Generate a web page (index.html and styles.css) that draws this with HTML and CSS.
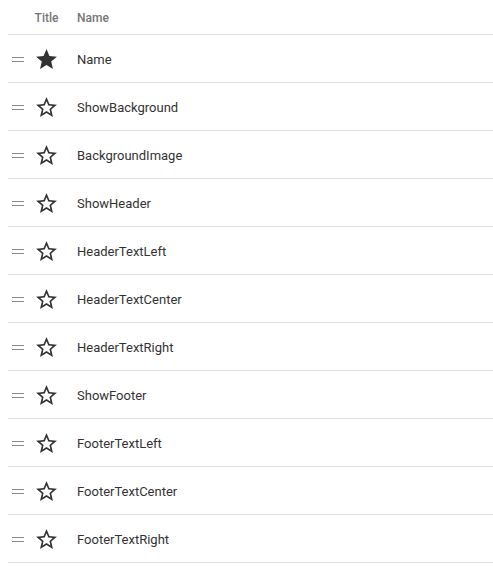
FILE: index.html
```html
<!DOCTYPE html>
<html>
<head>
<meta charset="utf-8">
<link rel="stylesheet" href="styles.css">
</head>
<body>
<div class="table">
  <div class="row head">
    <div class="cell"></div>
    <div class="cell title-h">Title</div>
    <div class="cell name">Name</div>
  </div>
  <div class="row">
    <div class="cell handle"><svg viewBox="0 0 12 5"><rect x="0" y="0" width="12" height="1"/><rect x="0" y="4" width="12" height="1"/></svg></div>
    <div class="cell star"><svg viewBox="0 0 24 24"><path d="M12 17.27L18.18 21l-1.64-7.03L22 9.24l-7.19-.61L12 2 9.19 8.63 2 9.24l5.46 4.73L5.82 21z"/></svg></div>
    <div class="cell name">Name</div>
  </div>
  <div class="row">
    <div class="cell handle"><svg viewBox="0 0 12 5"><rect x="0" y="0" width="12" height="1"/><rect x="0" y="4" width="12" height="1"/></svg></div>
    <div class="cell star"><svg viewBox="0 0 24 24"><path d="M22 9.24l-7.19-.62L12 2 9.19 8.63 2 9.24l5.46 4.73L5.82 21 12 17.27 18.18 21l-1.63-7.03L22 9.24zM12 15.4l-3.76 2.27 1-4.28-3.32-2.88 4.38-.38L12 6.1l1.71 4.04 4.38.38-3.32 2.88 1 4.28L12 15.4z"/></svg></div>
    <div class="cell name">ShowBackground</div>
  </div>
  <div class="row">
    <div class="cell handle"><svg viewBox="0 0 12 5"><rect x="0" y="0" width="12" height="1"/><rect x="0" y="4" width="12" height="1"/></svg></div>
    <div class="cell star"><svg viewBox="0 0 24 24"><path d="M22 9.24l-7.19-.62L12 2 9.19 8.63 2 9.24l5.46 4.73L5.82 21 12 17.27 18.18 21l-1.63-7.03L22 9.24zM12 15.4l-3.76 2.27 1-4.28-3.32-2.88 4.38-.38L12 6.1l1.71 4.04 4.38.38-3.32 2.88 1 4.28L12 15.4z"/></svg></div>
    <div class="cell name">BackgroundImage</div>
  </div>
  <div class="row">
    <div class="cell handle"><svg viewBox="0 0 12 5"><rect x="0" y="0" width="12" height="1"/><rect x="0" y="4" width="12" height="1"/></svg></div>
    <div class="cell star"><svg viewBox="0 0 24 24"><path d="M22 9.24l-7.19-.62L12 2 9.19 8.63 2 9.24l5.46 4.73L5.82 21 12 17.27 18.18 21l-1.63-7.03L22 9.24zM12 15.4l-3.76 2.27 1-4.28-3.32-2.88 4.38-.38L12 6.1l1.71 4.04 4.38.38-3.32 2.88 1 4.28L12 15.4z"/></svg></div>
    <div class="cell name">ShowHeader</div>
  </div>
  <div class="row">
    <div class="cell handle"><svg viewBox="0 0 12 5"><rect x="0" y="0" width="12" height="1"/><rect x="0" y="4" width="12" height="1"/></svg></div>
    <div class="cell star"><svg viewBox="0 0 24 24"><path d="M22 9.24l-7.19-.62L12 2 9.19 8.63 2 9.24l5.46 4.73L5.82 21 12 17.27 18.18 21l-1.63-7.03L22 9.24zM12 15.4l-3.76 2.27 1-4.28-3.32-2.88 4.38-.38L12 6.1l1.71 4.04 4.38.38-3.32 2.88 1 4.28L12 15.4z"/></svg></div>
    <div class="cell name">HeaderTextLeft</div>
  </div>
  <div class="row">
    <div class="cell handle"><svg viewBox="0 0 12 5"><rect x="0" y="0" width="12" height="1"/><rect x="0" y="4" width="12" height="1"/></svg></div>
    <div class="cell star"><svg viewBox="0 0 24 24"><path d="M22 9.24l-7.19-.62L12 2 9.19 8.63 2 9.24l5.46 4.73L5.82 21 12 17.27 18.18 21l-1.63-7.03L22 9.24zM12 15.4l-3.76 2.27 1-4.28-3.32-2.88 4.38-.38L12 6.1l1.71 4.04 4.38.38-3.32 2.88 1 4.28L12 15.4z"/></svg></div>
    <div class="cell name">HeaderTextCenter</div>
  </div>
  <div class="row">
    <div class="cell handle"><svg viewBox="0 0 12 5"><rect x="0" y="0" width="12" height="1"/><rect x="0" y="4" width="12" height="1"/></svg></div>
    <div class="cell star"><svg viewBox="0 0 24 24"><path d="M22 9.24l-7.19-.62L12 2 9.19 8.63 2 9.24l5.46 4.73L5.82 21 12 17.27 18.18 21l-1.63-7.03L22 9.24zM12 15.4l-3.76 2.27 1-4.28-3.32-2.88 4.38-.38L12 6.1l1.71 4.04 4.38.38-3.32 2.88 1 4.28L12 15.4z"/></svg></div>
    <div class="cell name">HeaderTextRight</div>
  </div>
  <div class="row">
    <div class="cell handle"><svg viewBox="0 0 12 5"><rect x="0" y="0" width="12" height="1"/><rect x="0" y="4" width="12" height="1"/></svg></div>
    <div class="cell star"><svg viewBox="0 0 24 24"><path d="M22 9.24l-7.19-.62L12 2 9.19 8.63 2 9.24l5.46 4.73L5.82 21 12 17.27 18.18 21l-1.63-7.03L22 9.24zM12 15.4l-3.76 2.27 1-4.28-3.32-2.88 4.38-.38L12 6.1l1.71 4.04 4.38.38-3.32 2.88 1 4.28L12 15.4z"/></svg></div>
    <div class="cell name">ShowFooter</div>
  </div>
  <div class="row">
    <div class="cell handle"><svg viewBox="0 0 12 5"><rect x="0" y="0" width="12" height="1"/><rect x="0" y="4" width="12" height="1"/></svg></div>
    <div class="cell star"><svg viewBox="0 0 24 24"><path d="M22 9.24l-7.19-.62L12 2 9.19 8.63 2 9.24l5.46 4.73L5.82 21 12 17.27 18.18 21l-1.63-7.03L22 9.24zM12 15.4l-3.76 2.27 1-4.28-3.32-2.88 4.38-.38L12 6.1l1.71 4.04 4.38.38-3.32 2.88 1 4.28L12 15.4z"/></svg></div>
    <div class="cell name">FooterTextLeft</div>
  </div>
  <div class="row">
    <div class="cell handle"><svg viewBox="0 0 12 5"><rect x="0" y="0" width="12" height="1"/><rect x="0" y="4" width="12" height="1"/></svg></div>
    <div class="cell star"><svg viewBox="0 0 24 24"><path d="M22 9.24l-7.19-.62L12 2 9.19 8.63 2 9.24l5.46 4.73L5.82 21 12 17.27 18.18 21l-1.63-7.03L22 9.24zM12 15.4l-3.76 2.27 1-4.28-3.32-2.88 4.38-.38L12 6.1l1.71 4.04 4.38.38-3.32 2.88 1 4.28L12 15.4z"/></svg></div>
    <div class="cell name">FooterTextCenter</div>
  </div>
  <div class="row">
    <div class="cell handle"><svg viewBox="0 0 12 5"><rect x="0" y="0" width="12" height="1"/><rect x="0" y="4" width="12" height="1"/></svg></div>
    <div class="cell star"><svg viewBox="0 0 24 24"><path d="M22 9.24l-7.19-.62L12 2 9.19 8.63 2 9.24l5.46 4.73L5.82 21 12 17.27 18.18 21l-1.63-7.03L22 9.24zM12 15.4l-3.76 2.27 1-4.28-3.32-2.88 4.38-.38L12 6.1l1.71 4.04 4.38.38-3.32 2.88 1 4.28L12 15.4z"/></svg></div>
    <div class="cell name">FooterTextRight</div>
  </div>
</div>
</body>
</html>
```

FILE: styles.css
```css
html, body {
  background: #fff;
}
body {
  margin: 0 0 0 8px;
  font-family: Roboto, "Liberation Sans", sans-serif;
}
.table {
  display: flex;
  flex-direction: column;
}
.row {
  display: grid;
  grid-template-columns: 26px 25px 1fr;
  align-items: center;
  height: 47px;
  border-bottom: 1px solid #e0e0e0;
}
.row.head {
  height: 34px;
}
.title-h {
  font-size: 12px;
  font-weight: 500;
  color: #757575;
  text-align: center;
  white-space: nowrap;
  padding-top: 1px;
}
.head .name {
  font-size: 12px;
  font-weight: 500;
  color: #757575;
}
.name {
  padding-left: 18px;
  padding-top: 1px;
  font-size: 13px;
  color: #333;
}
.handle {
  display: flex;
  align-items: center;
  padding-left: 4px;
  padding-top: 2px;
}
.handle svg {
  display: block;
  width: 12px;
  height: 5px;
  fill: #8a8a8a;
}
.star {
  display: flex;
  align-items: center;
  padding-top: 1px;
}
.star svg {
  display: block;
  width: 25px;
  height: 25px;
  fill: #333;
}
```
